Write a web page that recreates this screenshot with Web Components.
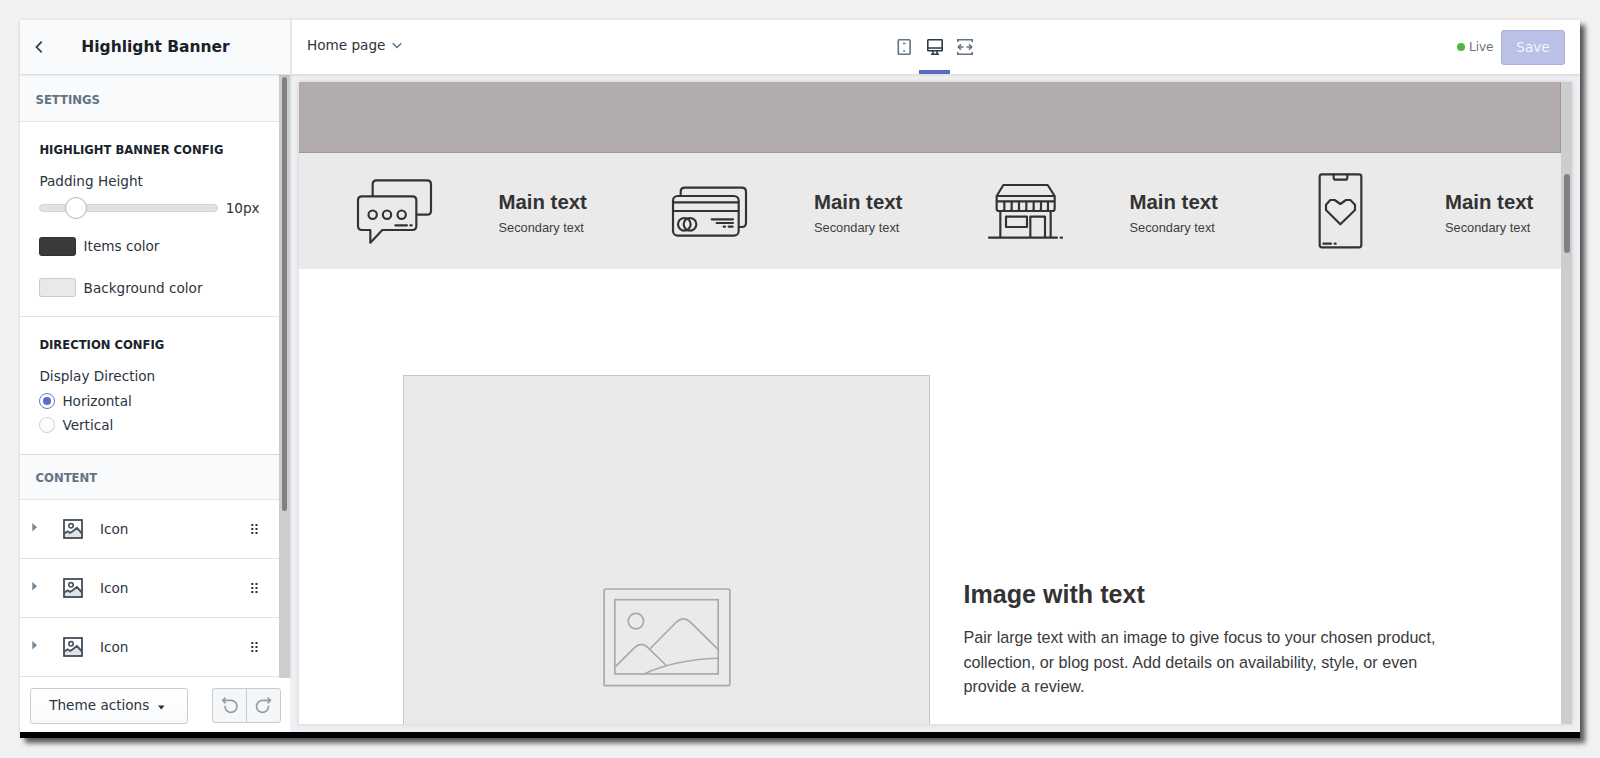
<!DOCTYPE html>
<html lang="en">
<head>
<meta charset="utf-8">
<title>Highlight Banner</title>
<style>
html,body{margin:0;height:100%;overflow:hidden;background:#f1f1f1}
body{font:13.6px/20px "DejaVu Sans",sans-serif;color:#2a3440;padding:20px;box-sizing:border-box}
</style>
</head>
<body>
<theme-editor></theme-editor>
<script>
const define = (name, html) => {
  const t = document.createElement('template');
  t.innerHTML = html;
  customElements.define(name, class extends HTMLElement {
    constructor() {
      super();
      this.attachShadow({ mode: 'open' }).append(t.content.cloneNode(true));
    }
  });
};

define('editor-sidebar-header', `
<style>
:host{display:flex;align-items:center;height:55px;box-sizing:border-box;background:#f9fafc;padding:0 15px 1px 14px;border-right:2px solid #e6e8eb;border-bottom:1px solid #dcdfe2;position:relative;z-index:1;box-shadow:0 1px 2px #00000012}
h1{margin:0;font-size:15.500px;line-height:20px;font-weight:700;color:#1a2128;flex:1;text-align:center;padding-left:31px;padding-right:41px;white-space:nowrap}
svg{display:block;flex:none}
</style>
<svg width="12" height="14" viewBox="0 0 12 14" fill="none" stroke="#38424c" stroke-width="1.800"><path d="M7.700 1.700 2.500 7.100l5.200 5.200"/></svg>
<h1><slot></slot></h1>`);

define('group-header', `
<style>
:host{display:block;box-sizing:border-box;padding:0 15.500px;background:#f9fafc;border-bottom:1px solid #e1e4e8;font-size:11.650px;font-weight:700;color:#637381;white-space:nowrap}
</style><slot></slot>`);

define('setting-group', `
<style>
:host{display:block;box-sizing:border-box;padding:18px 19px 0 19.400px;background:#fff}
h2{margin:0;font-size:11.600px;line-height:20px;font-weight:700;color:#19222c;white-space:nowrap}
</style><h2><slot name="title"></slot></h2><slot></slot>`);

define('range-slider', `
<style>
:host{display:block;padding-top:11px}
.row{display:flex;align-items:center;height:34px;gap:7.300px}
.track{width:179px;height:8px;box-sizing:border-box;border-radius:4px;background:#dfe3e8;border:1px solid #d0d5dc;display:flex;align-items:center;padding-left:25px;flex:none}
.thumb{width:22px;height:22px;box-sizing:border-box;border-radius:50%;border:1px solid #a9b7c5;background:#fff;flex:none}
</style>
<div><slot name="label"></slot></div>
<div class="row"><div class="track"><div class="thumb"></div></div><span><slot name="value"></slot></span></div>`);

define('color-setting', `
<style>
:host{display:flex;align-items:center;gap:7.200px;height:20px}
i{width:37px;height:19px;box-sizing:border-box;border-radius:3px;background:var(--swatch);border:1px solid #0000001f}
</style><i></i><span><slot></slot></span>`);

define('radio-option', `
<style>
:host{display:flex;align-items:center;gap:7px;height:24px}
i{width:16px;height:16px;box-sizing:border-box;border-radius:50%;border:1px solid #c9d0d8;background:linear-gradient(#fff,#f9fafb);display:grid;place-items:center}
:host([checked]) i{border-color:#6a77cc;background:#fff}
:host([checked]) i::after{content:"";width:8px;height:8px;border-radius:50%;background:#5c6ac4}
</style><i></i><span><slot></slot></span>`);

define('block-row', `
<style>
:host{display:flex;align-items:center;height:59px;box-sizing:border-box;border-bottom:1px solid #dfe3e8;background:#fff;padding:0 21.500px 0 12.400px}
svg{display:block;flex:none}
.pic{margin:0 17px 0 25.600px}
span{flex:1}
</style>
<svg width="5" height="9" viewBox="0 0 5 9" style="margin-top:-3px"><path d="M.3 0 5 4.300.3 8.600Z" fill="#74879a"/></svg>
<svg class="pic" width="20" height="20" viewBox="0 0 20 20"><path d="M1 14.500 5 12l2 1.500L13 8l6 6v5H1Z" fill="#dfe3e8"/><rect x="1" y="1" width="18" height="18" fill="none" stroke="#37424e" stroke-width="1.700"/><path d="M1.500 14.500 4.500 12.300l2.500 1.500 2.500-1.300 4.500-3.500 4.500 5" fill="none" stroke="#46525e" stroke-width="1.900"/><circle cx="8" cy="6.800" r="2.200" fill="#fff" stroke="#46525e" stroke-width="1.600"/></svg>
<span><slot></slot></span>
<svg width="7" height="10" viewBox="0 0 7 10" fill="#273039"><path d="M.3 0h2v2h-2zM4.500 0h2v2h-2zM.3 4h2v2h-2zM4.500 4h2v2h-2zM.3 8h2v2h-2zM4.500 8h2v2h-2z"/></svg>`);

define('scroll-bar', `
<style>
:host{display:block;background:#cdcdcd;width:11px;box-sizing:border-box;padding:var(--start) 3px 0}
i{display:block;width:var(--thumb-width,5px);height:var(--size);border-radius:3px;background:#7f8182}
</style><i></i>`);

define('sidebar-footer', `
<style>
:host{display:flex;align-items:flex-start;justify-content:space-between;height:54px;box-sizing:border-box;padding:10px 9px 0 10px;background:#fff;border-right:2px solid #eef0f2}
.main{display:flex;align-items:center;justify-content:space-between;width:158px;height:36px;box-sizing:border-box;border:1px solid #c4cdd5;border-radius:3px;background:linear-gradient(#fff,#f9fafb);padding:0 22px 2px 18.200px;white-space:nowrap}
.pair{display:flex;width:69px;height:35px;box-sizing:border-box;border:1px solid #c4cdd5;border-radius:3px;background:#f4f6f8}
.pair div{flex:1;display:grid;place-items:center}
.pair div+div{border-left:1px solid #c4cdd5}
svg{display:block}
</style>
<div class="main"><span>Theme actions</span><svg width="7" height="5" viewBox="0 0 7 5" style="margin-top:5px"><path d="M0 .5h6.500L3.300 4.500Z" fill="#212b36"/></svg></div>
<div class="pair">
<div><svg width="18" height="18" viewBox="0 0 18 18" fill="none" stroke="#8f9dab" stroke-width="1.600" stroke-linecap="round" stroke-linejoin="round"><path d="M4.200 1 1.700 3.400l2.500 2.400M2 3.400h8a6 6 0 1 1-6 6"/></svg></div>
<div><svg width="18" height="18" viewBox="0 0 18 18" fill="none" stroke="#8f9dab" stroke-width="1.600" stroke-linecap="round" stroke-linejoin="round"><path d="m13 1 2.500 2.400-2.500 2.400M15 3.400H7.500a6 6 0 1 0 6 6"/></svg></div>
</div>`);

define('editor-sidebar', `
<style>
:host{display:flex;flex-direction:column;width:272px;flex:none;height:712px}
.body{display:flex;height:603px;border-right:2px solid #e3e5e8;box-sizing:border-box}
.list{width:259px;flex:none;height:603px;overflow:hidden;background:#fff;box-sizing:border-box}
.a{height:47px;line-height:51px}
.b{height:45px;line-height:47px}
.g1{height:195px;border-bottom:1px solid #dfe3e8}
.g2{height:138px;border-bottom:1px solid #d5d9dd}
scroll-bar{--start:2px;--size:434px}
</style>
<editor-sidebar-header>Highlight Banner</editor-sidebar-header>
<div class="body">
<div class="list">
<group-header class="a">SETTINGS</group-header>
<setting-group class="g1"><span slot="title">HIGHLIGHT BANNER CONFIG</span>
<range-slider><span slot="label">Padding Height</span><span slot="value">10px</span></range-slider>
<color-setting style="--swatch:#3a3a3a;margin-top:11px">Items color</color-setting>
<color-setting style="--swatch:#e9e9e9;margin-top:21.500px">Background color</color-setting>
</setting-group>
<setting-group class="g2"><span slot="title">DIRECTION CONFIG</span>
<div style="padding-top:11px;margin-bottom:3px">Display Direction</div>
<radio-option checked>Horizontal</radio-option>
<radio-option>Vertical</radio-option>
</setting-group>
<group-header class="b">CONTENT</group-header>
<block-row>Icon</block-row><block-row>Icon</block-row><block-row>Icon</block-row>
</div>
<scroll-bar></scroll-bar>
</div>
<sidebar-footer></sidebar-footer>`);

define('editor-toolbar', `
<style>
:host{display:grid;grid-template-columns:1fr 90px 1fr;height:55px;box-sizing:border-box;background:#fff;border-bottom:1px solid #dcdfe2;box-shadow:0 1px 2px #00000012;position:relative;z-index:1}
svg{display:block}
.page{display:flex;align-items:center;gap:7px;padding:0 0 4px 15px}
.views{display:flex;margin-left:-2px}
.views div{width:30px;flex:none;display:grid;place-items:center;box-sizing:border-box;padding-top:4px;height:54px;border-bottom:4px solid transparent}
.views .on{width:31px;border-color:#5c6ac4}
.right{display:flex;align-items:center;justify-content:flex-end;padding-right:15px}
.dot{width:8px;height:8px;border-radius:50%;background:#50b83c;margin-right:4px}
.live{font-size:12px;color:#637381;margin-right:7.500px}
.save{width:64px;height:35px;box-sizing:border-box;border:1px solid #a7aee2;border-radius:3px;background:#bac0e6;color:#f4f5fc;display:grid;place-items:center}
</style>
<div class="page"><span>Home page</span><svg width="10" height="7" viewBox="0 0 10 7" fill="none" stroke="#637381" stroke-width="1.500"><path d="m.7 1.200 4.300 4.300 4.300-4.300"/></svg></div>
<div class="views">
<div><svg width="16" height="16" viewBox="0 0 16 16" fill="none" stroke="#637381" stroke-width="1.600"><rect x="2.300" y=".8" width="11.800" height="14.400" rx=".8"/><path d="M7 4.500h2.400M7.300 12h1.800"/></svg></div>
<div class="on"><svg width="16" height="16" viewBox="0 0 16 16" fill="none" stroke="#2f3a46" stroke-width="1.600"><rect x=".8" y=".8" width="14.400" height="11" rx=".6"/><path d="M1 9h14M6 12v2.500M10 12v2.500M4 15.200h8"/></svg></div>
<div><svg width="16" height="16" viewBox="0 0 16 16" fill="none" stroke="#637381" stroke-width="1.600"><path d="M.8 3V.8h14.400V3M.8 13v2.200h14.400V13M1.500 8h5M9.500 8h5M4 5.300 1.300 8 4 10.700M12 5.300 14.700 8 12 10.700"/></svg></div>
</div>
<div class="right"><i class="dot"></i><span class="live">Live</span><div class="save">Save</div></div>`);

define('highlight-item', `
<style>
:host{display:flex;align-items:center;flex:1 1 0;min-width:0;padding-left:57.500px;box-sizing:border-box;color:#333;white-space:nowrap;font-family:"Liberation Sans",Arial,sans-serif}
.txt{margin-left:67px}
b{display:block;font-size:20.400px;line-height:24px;margin-top:5px}
small{display:block;font-size:12.800px;line-height:18px;margin-top:5px;color:#3f3f3f}
</style>
<slot name="icon"></slot>
<div class="txt"><b><slot name="main"></slot></b><small><slot name="sub"></slot></small></div>`);

define('highlight-banner', `
<style>
:host{display:flex;height:116px;background:#eaeaea}
svg{width:75px;height:75px;display:block;fill:none;stroke:#333;stroke-width:6.500;stroke-linecap:round;stroke-linejoin:round;flex:none;overflow:visible;margin-bottom:1.500px}
</style>
<highlight-item><svg slot="icon" viewBox="52 40 225 225"><path d="M99 107V74q0-12 12-12h151q12 0 12 12v79q0 12-12 12h-28"/><path d="M67 110h151q12 0 12 12v77q0 12-12 12h-90l-36 38v-38H67q-12 0-12-12v-77q0-12 12-12Z"/><circle cx="99" cy="165" r="12.500"/><circle cx="142" cy="165" r="12.500"/><circle cx="186" cy="165" r="12.500"/><path d="M167 197h35M212 197h4"/></svg><span slot="main">Main text</span><span slot="sub">Secondary text</span></highlight-item>
<highlight-item><svg slot="icon" viewBox="67 40 225 225"><path d="M93 107V97q0-13 13-13h170q13 0 13 13v92q0 13-13 13h-7"/><rect x="70" y="109" width="197" height="119" rx="14"/><path d="M71 128h195M71 154h195M186 179h64M201 190h49M222 201h4M237 201h12"/><circle cx="104" cy="194" r="19"/><circle cx="121" cy="194" r="19"/></svg><span slot="main">Main text</span><span slot="sub">Secondary text</span></highlight-item>
<highlight-item><svg slot="icon" viewBox="54 40 225 225"><path d="M80 109 100 76h133l21 33v38q0 7-7 7H87q-7 0-7-7ZM80 109h174M80 125h174M103 127v23q-2 4-7 4M125 127v23q-2 4-7 4M147 127v23q-2 4-7 4M169 127v23q-2 4-7 4M191 127v23q-2 4-7 4M213 127v23q-2 4-7 4M234 127v23q-2 4-7 4M91 156v76M242 156v76M181 232v-61h44v61M108 171h63v31h-63ZM57 234h204M272 234h4"/></svg><span slot="main">Main text</span><span slot="sub">Secondary text</span></highlight-item>
<highlight-item><svg slot="icon" viewBox="39 40 225 225"><rect x="89" y="44" width="125" height="219" rx="7"/><path d="M131 45v9q0 6 6 6h29q6 0 6-6v-9M151 194l-43-43v-16l13-14h13l17 12 17-12h13l14 14v16ZM100 252h23M134 252h3"/></svg><span slot="main">Main text</span><span slot="sub">Secondary text</span></highlight-item>`);

define('image-with-text', `
<style>
:host{display:flex;padding:106px 0 0 104.400px;height:349px;color:#333;font-family:"Liberation Sans",Arial,sans-serif}
.media{width:526.600px;height:500px;box-sizing:border-box;background:#eaeaea;border:1px solid #c6c6c6;display:flex;justify-content:center;padding-top:212px;padding-left:1px;flex:none}
svg{display:block;width:128px;height:99px;flex:none;fill:none;stroke:#a9a9a9;stroke-width:5}
.copy{margin:202.500px 0 0 33.500px;white-space:nowrap}
h2{margin:0;font-size:25.100px;line-height:32px;font-weight:700}
p{margin:15.500px 0 0;font-size:16.150px;line-height:24.500px;color:#3a3a3a}
</style>
<div class="media"><svg viewBox="72 56 382 296"><rect x="75" y="59" width="376" height="289" rx="5"/><rect x="107" y="91" width="309" height="222"/><circle cx="170" cy="155" r="23"/><path d="M108 292 166 234q20-19 40 0l57 56M213 237l79-80q20-17 40 0l83 82M194 313q90-42 221-47"/></svg></div>
<div class="copy"><h2>Image with text</h2><p>Pair large text with an image to give focus to your chosen product,<br>collection, or blog post. Add details on availability, style, or even<br>provide a review.</p></div>`);

define('store-preview', `
<style>
:host{display:flex;width:1273px;height:642px;background:#fff;box-shadow:0 0 5px #00000024}
.page{width:1262px;height:642px;overflow:hidden;flex:none}
.hero{height:71px;box-sizing:border-box;background:#b2acac;border:1px solid #9f9898;border-top:0;border-left:0}
scroll-bar{--start:92px;--size:79px;--thumb-width:6px}
</style>
<div class="page"><div class="hero"></div><highlight-banner></highlight-banner><image-with-text></image-with-text></div>
<scroll-bar></scroll-bar>`);

define('theme-editor', `
<style>
:host{display:flex;width:1560px;height:718px;box-sizing:border-box;background:#eef0f3;border-bottom:6px solid #000;box-shadow:5px 5px 5px #000000a0,0 0 3px #0000001c}
main{flex:1;min-width:0}
store-preview{margin:7px 0 0 7px}
</style>
<editor-sidebar></editor-sidebar>
<main><editor-toolbar></editor-toolbar><store-preview></store-preview></main>`);
</script>
</body>
</html>
